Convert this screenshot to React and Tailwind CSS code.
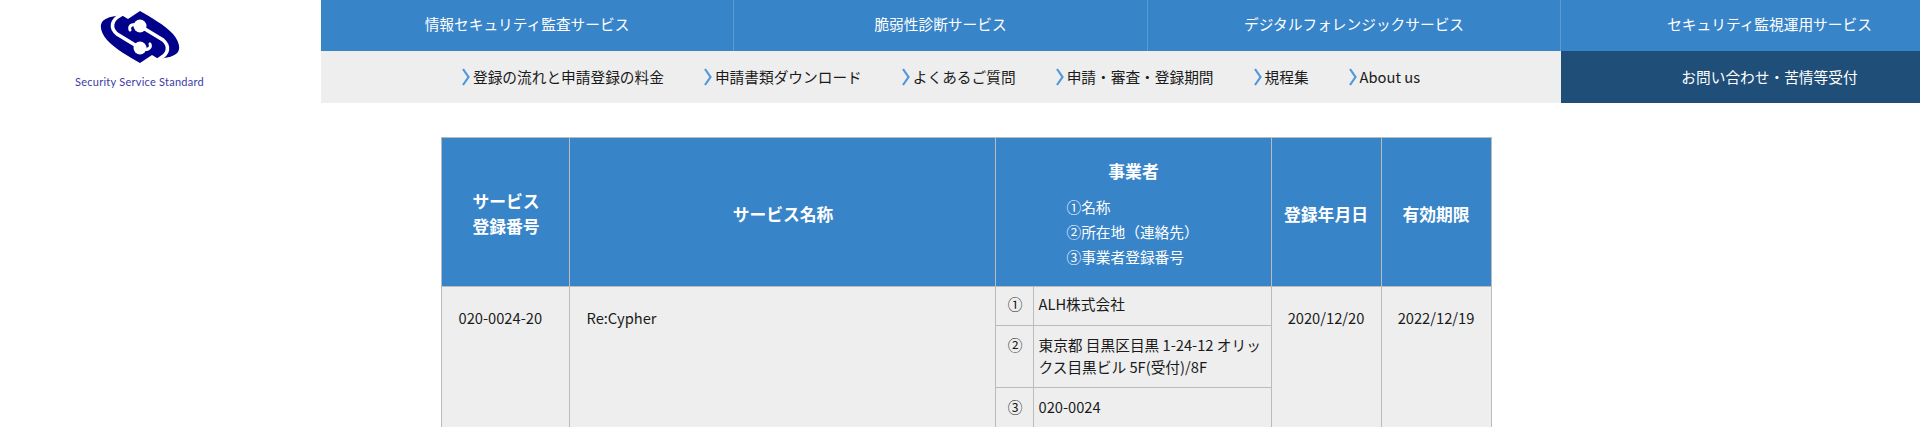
const topLinks = [
  { label: '情報セキュリティ監査サービス', className: 'w-[413px] border-r border-[#5c9ad6]' },
  { label: '脆弱性診断サービス', className: 'w-[414px] border-r border-[#5c9ad6]' },
  { label: 'デジタルフォレンジックサービス', className: 'w-[413px] border-r border-[#5c9ad6]' },
  { label: 'セキュリティ監視運用サービス', className: 'flex-1 pl-[58px]' },
];

const subLinks = ['登録の流れと申請登録の料金', '申請書類ダウンロード', 'よくあるご質問', '申請・審査・登録期間', '規程集', 'About us'];

const Chevron = () => (
  <svg width="8" height="18" viewBox="0 0 8 18" className="mr-[3px] shrink-0" fill="none">
    <path d="M1 1 L6.5 9 L1 17" stroke="#4f98dc" strokeWidth="2.2" />
  </svg>
);

// the mark is point-symmetric, so one half of the white bands is drawn and rotated
const LogoBands = () => (
  <g fill="none" stroke="#ffffff" strokeLinecap="round">
    <path d="M-19,-22 C-29,-17 -30,-9 -23,-3 L0,11" strokeWidth="3.6" />
    <path d="M0,-11 C-6,-14 -12,-12 -10,-7" strokeWidth="3" />
    <circle cx="0" cy="11" r="6.5" fill="#ffffff" stroke="none" />
  </g>
);

const Logo = () => (
  <div className="w-[321px] shrink-0 flex flex-col items-center">
    <svg width="80" height="54" viewBox="-40 -27 80 54" className="mt-[10px] ml-[-42px]">
      <path
        fill="#00008b"
        d="M0,-26 C10,-20 25,-12 33,-3 C38,3 41,10 38,15 C34,20 24,22 17,21 L12,18 L0,26 C-10,20 -25,12 -33,3 C-38,-3 -41,-10 -38,-15 C-34,-20 -24,-22 -17,-21 L-12,-18 Z"
      />
      <LogoBands />
      <g transform="rotate(180)">
        <LogoBands />
      </g>
    </svg>
    <span className="mt-[11px] ml-[-42px] text-[11px] leading-[14px] font-['Lato',sans-serif] text-[#3b3ba6] tracking-[0.25px]">
      Security Service Standard
    </span>
  </div>
);

const Nav = () => (
  <div className="flex-1">
    <div className="flex h-[51px] bg-[#3884c9] text-white">
      {topLinks.map((link) => (
        <a key={link.label} className={`flex items-center justify-center pb-[3px] text-[14.7px] ${link.className}`}>
          {link.label}
        </a>
      ))}
    </div>
    <div className="flex h-[52px]">
      <div className="w-[1240px] bg-[#eeeeee] flex items-center justify-center gap-[40px] text-[14.7px] text-[#1a1a1a]">
        {subLinks.map((link) => (
          <a key={link} className="flex items-center">
            <Chevron />
            {link}
          </a>
        ))}
      </div>
      <div className="flex-1 bg-[#1f4e79] text-white flex items-center justify-center pl-[58px] text-[14.7px]">
        お問い合わせ・苦情等受付
      </div>
    </div>
  </div>
);

const thClass = 'border border-[#bbbbbb] bg-[#3884c9] text-white font-bold text-[16.8px] leading-[25px] text-center align-middle pt-[4px]';
const tdClass = 'border border-[#bbbbbb] text-[14.7px] leading-[22px] align-top';

const App = () => (
  <div className="h-[427px] overflow-hidden bg-white font-['Noto_Sans_CJK_JP','Noto_Sans',sans-serif]">
    <header className="flex">
      <Logo />
      <Nav />
    </header>
    <main className="flex justify-center pt-[34px] pl-[13px]">
      <table className="w-[1049px] table-fixed border-collapse bg-[#eeeeee] text-[#1a1a1a]">
        <colgroup>
          <col className="w-[128px]" />
          <col className="w-[426px]" />
          <col className="w-[38px]" />
          <col className="w-[237px]" />
          <col className="w-[110px]" />
          <col className="w-[110px]" />
        </colgroup>
        <thead>
          <tr className="h-[149px]">
            <th className={thClass}>
              サービス
              <br />
              登録番号
            </th>
            <th className={thClass}>サービス名称</th>
            <th className={thClass} colSpan={2}>
              事業者
              <div className="mt-[10px] ml-[70px] text-left font-normal text-[14.7px]">
                <div>①名称</div>
                <div>②所在地（連絡先）</div>
                <div>③事業者登録番号</div>
              </div>
            </th>
            <th className={thClass}>登録年月日</th>
            <th className={thClass}>有効期限</th>
          </tr>
        </thead>
        <tbody>
          <tr className="h-[39px]">
            <td className={`${tdClass} pt-[20px] pl-[16px]`} rowSpan={3}>
              020-0024-20
            </td>
            <td className={`${tdClass} pt-[20px] pl-[16px]`} rowSpan={3}>
              Re:Cypher
            </td>
            <td className={`${tdClass} pt-[6px] text-center`}>①</td>
            <td className={`${tdClass} pt-[6px] pl-[4px]`}>ALH株式会社</td>
            <td className={`${tdClass} pt-[20px] text-center`} rowSpan={3}>
              2020/12/20
            </td>
            <td className={`${tdClass} pt-[20px] text-center`} rowSpan={3}>
              2022/12/19
            </td>
          </tr>
          <tr className="h-[62px]">
            <td className={`${tdClass} pt-[8px] text-center`}>②</td>
            <td className={`${tdClass} pt-[8px] pl-[4px]`}>東京都 目黒区目黒 1-24-12 オリックス目黒ビル 5F(受付)/8F</td>
          </tr>
          <tr className="h-[40px]">
            <td className={`${tdClass} pt-[8px] text-center`}>③</td>
            <td className={`${tdClass} pt-[8px] pl-[4px]`}>020-0024</td>
          </tr>
        </tbody>
      </table>
    </main>
  </div>
);

export default App;
